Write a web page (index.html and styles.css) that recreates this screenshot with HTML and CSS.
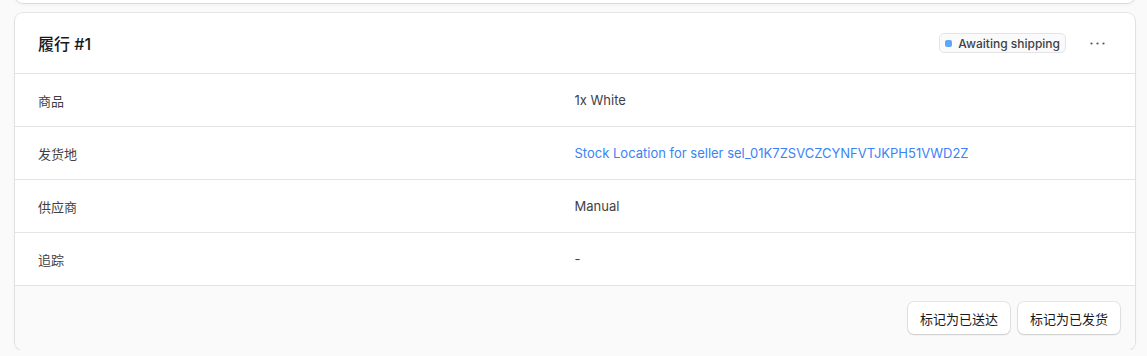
FILE: index.html
```html
<!doctype html>
<html lang="zh">

<head>
    <title>履行 #1</title>
    <meta charset="utf-8">
    <link rel="stylesheet" href="styles.css">
</head>

<body>
    <div class="vorigKort"></div>

    <div class="kort">
        <div class="kortHode">
            <h2>履行 #1</h2>
            <div class="hodeHoyre">
                <span class="merke"><span class="prikk"></span>Awaiting shipping</span>
                <button class="mer" aria-label="more">
                    <svg width="15" height="15" viewBox="0 0 15 15">
                        <circle cx="1.5" cy="7.5" r="1.1" fill="#52525b"/>
                        <circle cx="7.5" cy="7.5" r="1.1" fill="#52525b"/>
                        <circle cx="13.5" cy="7.5" r="1.1" fill="#52525b"/>
                    </svg>
                </button>
            </div>
        </div>

        <div class="rad">
            <span class="etikett">商品</span>
            <span class="verdi">1x White</span>
        </div>
        <div class="rad">
            <span class="etikett">发货地</span>
            <a class="verdi lenke" href="#">Stock Location for seller sel_01K7ZSVCZCYNFVTJKPH51VWD2Z</a>
        </div>
        <div class="rad">
            <span class="etikett">供应商</span>
            <span class="verdi">Manual</span>
        </div>
        <div class="rad">
            <span class="etikett">追踪</span>
            <span class="verdi">-</span>
        </div>

        <div class="kortFot">
            <button class="knapp">标记为已送达</button>
            <button class="knapp">标记为已发货</button>
        </div>
    </div>
</body>

</html>
```

FILE: styles.css
```css
body {
    background-color: rgb(250, 250, 250);
    font-family: Inter, "Noto Sans CJK SC", sans-serif;
    color: rgb(24, 24, 27);
    margin: 0;
    padding: 0 12px 0 15px;
}

.vorigKort {
    height: 20px;
    margin-top: -17px;
    background-color: white;
    border-radius: 8px;
    box-shadow: 0 0 0 1px rgba(0, 0, 0, 0.08), 0 1px 2px -1px rgba(0, 0, 0, 0.08), 0 2px 4px rgba(0, 0, 0, 0.04);
}

.kort {
    margin-top: 10px;
    background-color: white;
    border-radius: 8px;
    overflow: hidden;
    box-shadow: 0 0 0 1px rgba(0, 0, 0, 0.08), 0 1px 2px -1px rgba(0, 0, 0, 0.08), 0 2px 4px rgba(0, 0, 0, 0.04);
}

.kortHode {
    display: flex;
    align-items: center;
    justify-content: space-between;
    height: 60px;
    padding: 0 26px 0 23px;
    border-bottom: 1px solid rgb(228, 228, 231);
}

h2 {
    margin: 0;
    font-size: 16px;
    font-weight: 500;
}

.hodeHoyre {
    display: flex;
    align-items: center;
    gap: 19px;
}

.merke {
    display: flex;
    align-items: center;
    gap: 6px;
    height: 18px;
    padding: 0 5px;
    border: 1px solid rgb(228, 228, 231);
    border-radius: 5px;
    background-color: rgb(250, 250, 250);
    font-size: 12px;
    font-weight: 500;
    color: rgb(63, 63, 70);
}

.prikk {
    width: 7px;
    height: 7px;
    border-radius: 2px;
    background-color: rgb(96, 165, 250);
}

.mer {
    display: flex;
    align-items: center;
    justify-content: center;
    width: 24px;
    height: 24px;
    padding: 0;
    border: none;
    background: none;
    cursor: pointer;
}

.rad {
    display: grid;
    grid-template-columns: 1fr 1fr;
    align-items: center;
    height: 52px;
    padding: 0 24px 0 23px;
    border-bottom: 1px solid rgb(228, 228, 231);
    font-size: 13px;
}

.etikett {
    color: rgb(63, 63, 70);
}

.verdi {
    color: rgb(63, 63, 70);
}

.lenke {
    color: rgb(59, 130, 246);
    text-decoration: none;
}

.kortFot {
    display: flex;
    justify-content: flex-end;
    gap: 8px;
    height: 64px;
    padding: 0 15px;
    align-items: center;
    background-color: rgb(250, 250, 250);
}

.knapp {
    height: 32px;
    padding: 0 12px;
    font-family: Inter, "Noto Sans CJK SC", sans-serif;
    font-size: 13px;
    font-weight: 400;
    color: rgb(24, 24, 27);
    background-color: white;
    border: none;
    border-radius: 6px;
    box-shadow: 0 0 0 1px rgba(0, 0, 0, 0.08), 0 1px 2px rgba(0, 0, 0, 0.12);
    cursor: pointer;
}
```
